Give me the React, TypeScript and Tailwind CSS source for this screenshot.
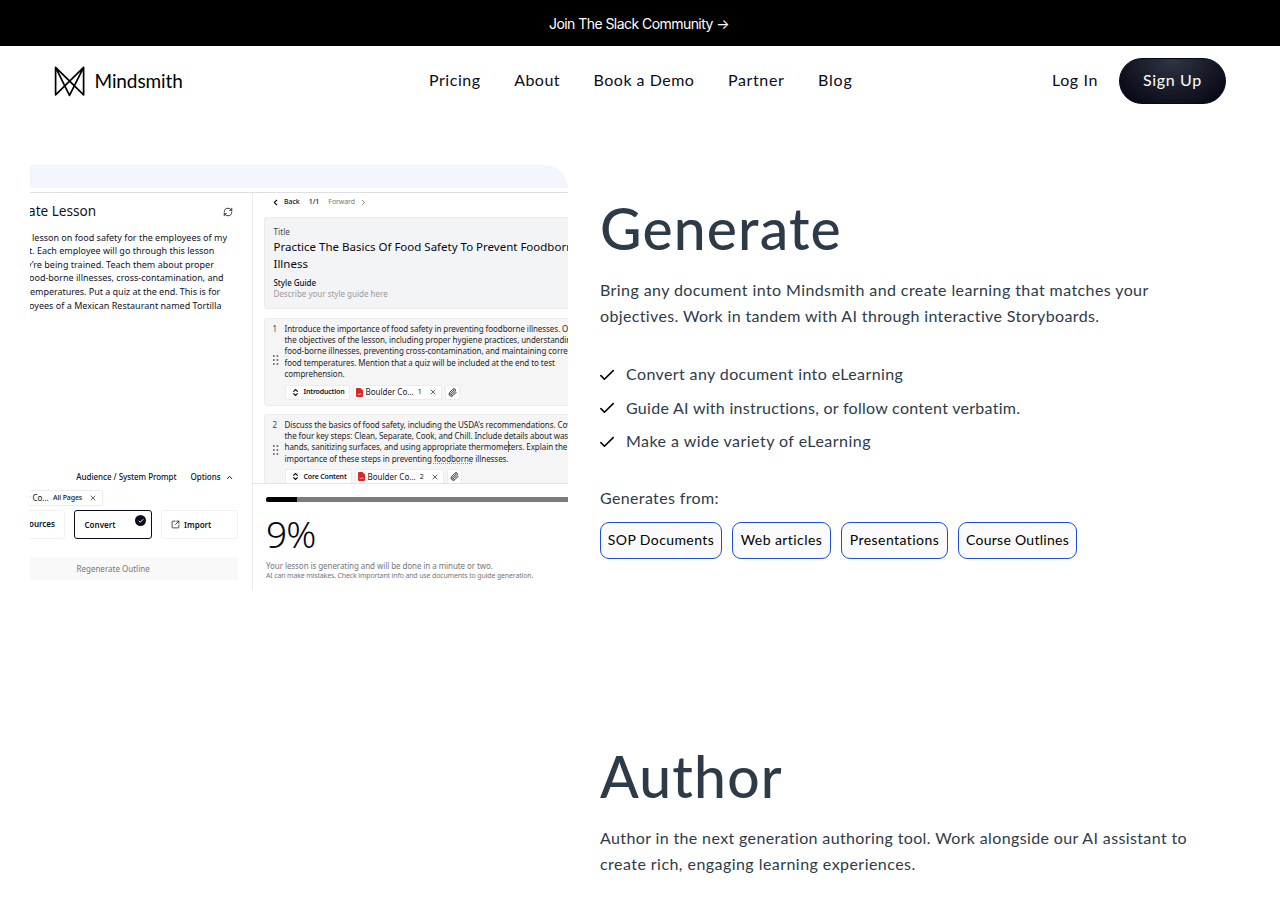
import type { ReactNode } from "react";
import { Check, ChevronLeft, ChevronRight, ChevronUp, ChevronsUpDown, Paperclip, RefreshCw, SquareArrowOutUpRight, X } from "lucide-react";

function Logo() {
  return (
    <svg className="h-[31px] w-[31px]" viewBox="0 0 31 31" fill="none" stroke="#000" strokeWidth="1.7" strokeLinejoin="round">
      <path d="M1.6 1.4V28.8L29.6 1.4V28.8L1.6 1.4L15.5 29.4L29.6 1.4" />
    </svg>
  );
}

function Banner() {
  return (
    <div className="flex h-[46px] items-center justify-center bg-black pr-[2px] font-['Inter',sans-serif] text-[14px] tracking-[-0.55px] text-white">
      Join The Slack Community →
    </div>
  );
}

function Header() {
  return (
    <header className="flex h-[70px] items-center justify-between pr-[54px] pl-[53.5px] text-[16px] text-[#0a0c1b]">
      <div className="flex w-[320px] items-center gap-[10px] pt-px">
        <Logo />
        <span className="pb-px text-[19px] tracking-[-0.1px] text-black">Mindsmith</span>
      </div>
      <nav className="flex gap-[33.5px] pb-[2px] pl-[2px]">
        <a className="tracking-[0.55px]">Pricing</a>
        <a className="tracking-[0.48px]">About</a>
        <a className="tracking-[0.5px]">Book a Demo</a>
        <a className="tracking-[0.65px]">Partner</a>
        <a className="tracking-[0.8px]">Blog</a>
      </nav>
      <div className="flex w-[320px] items-center justify-end gap-[21px]">
        <a className="pb-[2px] tracking-[0.62px]">Log In</a>
        <a className="flex h-[46px] w-[107px] items-center justify-center rounded-full border border-[#05071a] bg-[radial-gradient(ellipse_at_50%_0%,#2d3742_0%,#191b28_50%,#060817_90%)] pb-[2px] tracking-[0.65px] text-white">
          Sign Up
        </a>
      </div>
    </header>
  );
}

const promptLines: { text: string; className: string }[] = [
  { text: "lesson on food safety for the employees of my", className: "ml-[2px]" },
  { text: "t. Each employee will go through this lesson", className: "-ml-px" },
  { text: "y’re being trained. Teach them about proper", className: "-ml-[3px] tracking-[0.02px]" },
  { text: "ood-borne illnesses, cross-contamination, and", className: "-ml-px" },
  { text: "emperatures. Put a quiz at the end. This is for", className: "ml-0 tracking-[-0.03px]" },
  { text: "oyees of a Mexican Restaurant named Tortilla", className: "-ml-px tracking-[0.02px]" },
];

function PromptPanel() {
  return (
    <div className="flex w-[221.5px] shrink-0 flex-col pb-[10px]">
      <div className="flex h-[37px] items-center justify-between pr-[18.5px]">
        <span className="-ml-[2px] text-[13.6px]">ate Lesson</span>
        <RefreshCw className="size-[10px]" strokeWidth={2} />
      </div>
      <div className="mt-[0.7px] text-[9px] leading-[13.6px]">
        {promptLines.map((l) => (
          <div key={l.text} className={l.className}>{l.text}</div>
        ))}
      </div>
      <div className="mt-auto flex h-[20px] items-center justify-end pr-[18px] text-[8px] font-medium tracking-[-0.04px]">
        <span>Audience / System Prompt</span>
        <span className="ml-[14px]">Options</span>
        <ChevronUp className="ml-[4px] size-[9px]" strokeWidth={2.6} />
      </div>
      <div className="mt-[3px] flex h-[16px] w-[73px] items-center rounded-r-[2px] border border-l-0 border-[#ececec] text-[8px]">
        <span className="-ml-[3px] w-[26px] whitespace-nowrap">r Co...</span>
        <span className="text-[7px] font-medium tracking-[-0.13px]">All Pages</span>
        <X className="ml-[7px] size-[8px]" strokeWidth={2} />
      </div>
      <div className="mt-[4px] flex h-[29px] text-[8px] font-semibold">
        <div className="flex w-[35px] items-center rounded-r-[3px] border border-l-0 border-[#f1f1f1] pb-px">
          <span className="-ml-px">ources</span>
        </div>
        <div className="ml-[9px] flex w-[78px] shrink-0 justify-between rounded-[3px] border-[1.5px] border-[#0b0d1c] pr-[5px] pl-[9.5px]">
          <span className="leading-[27px]">Convert</span>
          <span className="mt-[4px] flex size-[11px] items-center justify-center rounded-full bg-[#0b0d1c] text-white">
            <Check className="size-[6px]" strokeWidth={4} />
          </span>
        </div>
        <div className="ml-[9px] flex w-[77px] shrink-0 items-center rounded-[3px] border border-[#f1f1f1] pl-[9px]">
          <SquareArrowOutUpRight className="size-[9px]" strokeWidth={2} />
          <span className="ml-[4px]">Import</span>
        </div>
      </div>
      <div className="mt-[18px] flex h-[23px] w-[208px] items-center bg-[#f9f9f9] pl-[46.5px] text-[8px] text-[#777]">Regenerate Outline</div>
    </div>
  );
}

function DragDots() {
  return (
    <svg className="h-[10px] w-[6px]" viewBox="0 0 6 10" fill="#555">
      {[1, 5, 9].map((y) => (
        <g key={y}>
          <rect x="0" y={y - 0.8} width="1.6" height="1.6" />
          <rect x="3.6" y={y - 0.8} width="1.6" height="1.6" />
        </g>
      ))}
    </svg>
  );
}

function PdfIcon() {
  return (
    <svg className="h-[9px] w-[7px]" viewBox="0 0 7 9">
      <path d="M1 0H4.4L7 2.6V8a1 1 0 0 1-1 1H1a1 1 0 0 1-1-1V1a1 1 0 0 1 1-1Z" fill="#dc2626" />
      <path d="M1.6 6.2q1 .7 1.9 0t1.9 0" fill="none" stroke="#fff" strokeWidth="0.7" />
    </svg>
  );
}

function Tag({ className, children }: { className: string; children: ReactNode }) {
  return <div className={`flex h-[15px] items-center rounded-[2px] border border-[#ececec] bg-white ${className}`}>{children}</div>;
}

type StepProps = { n: number; lines: ReactNode[]; label: string; labelWidth: string; dots: string; className: string };

function Step({ n, lines, label, labelWidth, dots, className }: StepProps) {
  return (
    <div className={`flex w-[340px] rounded-[3px] border border-[#ededed] bg-[#f5f5f5] pl-[8px] ${className}`}>
      <div className="flex w-[12px] shrink-0 flex-col pt-[4px] text-[8px] leading-[11.35px]">
        <span className="text-[#444]">{n}</span>
        <span className={dots}><DragDots /></span>
      </div>
      <div className="pt-[4px]">
        <div className="text-[8px] leading-[11.35px] tracking-[-0.06px] text-[#1d1f29]">
          {lines.map((l, i) => (
            <div key={i}>{l}</div>
          ))}
        </div>
        <div className="mt-[5.5px] flex gap-[3px]">
          <Tag className={labelWidth}>
            <ChevronsUpDown className="ml-[5px] size-[9px]" strokeWidth={3} />
            <span className="ml-[4px] text-[7px] font-semibold tracking-[-0.17px]">{label}</span>
          </Tag>
          <Tag className="w-[89px]">
            <span className="ml-[2px]"><PdfIcon /></span>
            <span className="ml-[3px] text-[8px]">Boulder Co...</span>
            <span className="ml-[4px] text-[7px]">{n}</span>
            <X className="ml-[7px] size-[8px]" strokeWidth={2} />
          </Tag>
          <Tag className="w-[15px] justify-center">
            <Paperclip className="size-[9px]" strokeWidth={2.4} />
          </Tag>
        </div>
      </div>
    </div>
  );
}

function Storyboard() {
  return (
    <div className="w-[330px] shrink-0 border-l border-[#ececec]">
      <div className="h-[290px] overflow-hidden pl-[11px]">
        <div className="flex h-[19px] items-center text-[7px] font-medium tracking-[-0.08px]">
          <ChevronLeft className="ml-[7px] size-[9px]" strokeWidth={3} />
          <span className="ml-[4.5px]">Back</span>
          <span className="ml-[9px] tracking-normal">1/1</span>
          <span className="ml-[9px] font-normal text-[#777]">Forward</span>
          <ChevronRight className="ml-[4px] size-[9px] text-[#777]" strokeWidth={2.5} />
        </div>
        <div className="mt-[5px] h-[92px] w-[340px] rounded-[3px] border border-[#e9ebed] bg-[#f3f4f6] pl-[9px]">
          <div className="mt-[9px] text-[8px] leading-[10px] tracking-[0.08px] text-[#444]">Title</div>
          <div className="mt-[0.5px] text-[11.5px] leading-[17px] text-[#06070f]">
            Practice The Basics Of Food Safety To Prevent Foodborne
            <br />
            Illness
          </div>
          <div className="mt-[5px] text-[8px] leading-[11px] font-medium tracking-[-0.05px]">Style Guide</div>
          <div className="text-[8px] leading-[12px] text-[#9b9b9b]">Describe your style guide here</div>
        </div>
        <Step
          n={1}
          className="mt-[8.5px] h-[88px]"
          dots="mt-[21px]"
          label="Introduction"
          labelWidth="w-[65px]"
          lines={[
            "Introduce the importance of food safety in preventing foodborne illnesses. Outline",
            "the objectives of the lesson, including proper hygiene practices, understanding",
            "food-borne illnesses, preventing cross-contamination, and maintaining correct",
            "food temperatures. Mention that a quiz will be included at the end to test",
            "comprehension.",
          ]}
        />
        <Step
          n={2}
          className="mt-[8px] h-[88px]"
          dots="mt-[15px]"
          label="Core Content"
          labelWidth="w-[67px]"
          lines={[
            "Discuss the basics of food safety, including the USDA's recommendations. Cover",
            <span className="tracking-[-0.08px]">the four key steps: Clean, Separate, Cook, and Chill. Include details about washing</span>,
            <>hands, sanitizing surfaces, and using appropriate thermome<span className="-mr-px border-l border-[#777]" />ters. Explain the</>,
            <>importance of these steps in preventing <span className="underline decoration-red-400 decoration-dotted decoration-[0.5px] underline-offset-1">foodborne</span> illnesses.</>,
          ]}
        />
      </div>
      <div className="h-[107px] border-t border-[#e5e5e5] pl-[13.5px]">
        <div className="mt-[13px] flex h-[5px] w-[330px] overflow-hidden rounded-full bg-[#7b7d7d]">
          <div className="w-[31px] bg-black" />
        </div>
        <div className="mt-[7px] text-[37px] leading-[50px] font-[350] tracking-[-0.9px] text-[#04050f]">9%</div>
        <div className="mt-px text-[8px] leading-[11px] tracking-[-0.075px] text-[#777]">Your lesson is generating and will be done in a minute or two.</div>
        <div className="text-[7px] leading-[9px] tracking-[-0.155px] text-[#777]">AI can make mistakes. Check important info and use documents to guide generation.</div>
      </div>
    </div>
  );
}

function ProductPreview() {
  return (
    <div className="h-[426px] w-[538px] shrink-0 overflow-hidden rounded-tr-[24px] bg-white font-['Noto_Sans',sans-serif] whitespace-nowrap text-[#11131f]">
      <div className="h-[23px] bg-[#f2f5fe]" />
      <div className="mt-[4px] flex h-[398px] border-t border-[#dfe0e4]">
        <PromptPanel />
        <Storyboard />
      </div>
    </div>
  );
}

const features: { text: string; className: string }[] = [
  { text: "Convert any document into eLearning", className: "tracking-[0.39px]" },
  { text: "Guide AI with instructions, or follow content verbatim.", className: "tracking-[0.28px]" },
  { text: "Make a wide variety of eLearning", className: "tracking-[0.46px]" },
];

const sources: { text: string; className: string }[] = [
  { text: "SOP Documents", className: "w-[122px] tracking-[0.4px]" },
  { text: "Web articles", className: "w-[99px] tracking-[0.43px]" },
  { text: "Presentations", className: "w-[107px] tracking-[0.45px]" },
  { text: "Course Outlines", className: "w-[119px] tracking-[0.27px]" },
];

function CheckMark() {
  return (
    <svg className="h-[12px] w-[14px]" viewBox="0 0 14 12" fill="none" stroke="#000" strokeWidth="1.6" strokeLinecap="round" strokeLinejoin="round">
      <path d="M0.9 6.6L4.4 10.2L13.2 1.6" />
    </svg>
  );
}

export default function App() {
  return (
    <div className="h-[900px] w-[1280px] overflow-hidden bg-white font-['Lato',sans-serif] text-[16px] text-[#2d3b49]">
      <Banner />
      <Header />
      <section className="flex gap-[32px] pt-[49px] pl-[30px]">
        <ProductPreview />
        <div className="pt-[29px] whitespace-nowrap">
          <h2 className="text-[57px] leading-[68px] font-medium tracking-[1.15px]">Generate</h2>
          <p className="mt-[15px] leading-[26px]">
            <span className="block tracking-[0.41px]">Bring any document into Mindsmith and create learning that matches your</span>
            <span className="block tracking-[0.36px]">objectives. Work in tandem with AI through interactive Storyboards.</span>
          </p>
          <ul className="mt-[29px]">
            {features.map((f) => (
              <li key={f.text} className="flex h-[33.5px] items-center gap-[12px]">
                <CheckMark />
                <span className={`pb-px ${f.className}`}>{f.text}</span>
              </li>
            ))}
          </ul>
          <p className="mt-[26px] leading-[26px] tracking-[0.36px]">Generates from:</p>
          <div className="mt-[11px] flex gap-[10px]">
            {sources.map((s) => (
              <span key={s.text} className={`flex h-[37px] items-center justify-center rounded-[9px] border border-[#1d4ed8] bg-[#fafafa] pb-[2px] text-[14px] text-black ${s.className}`}>
                {s.text}
              </span>
            ))}
          </div>
        </div>
      </section>
      <section className="pt-[151px] pl-[600px] whitespace-nowrap">
        <h2 className="text-[57px] leading-[68px] font-medium tracking-[1.15px]">Author</h2>
        <p className="mt-[15px] leading-[26px]">
          <span className="block tracking-[0.37px]">Author in the next generation authoring tool. Work alongside our AI assistant to</span>
          <span className="block tracking-[0.45px]">create rich, engaging learning experiences.</span>
        </p>
      </section>
    </div>
  );
}
